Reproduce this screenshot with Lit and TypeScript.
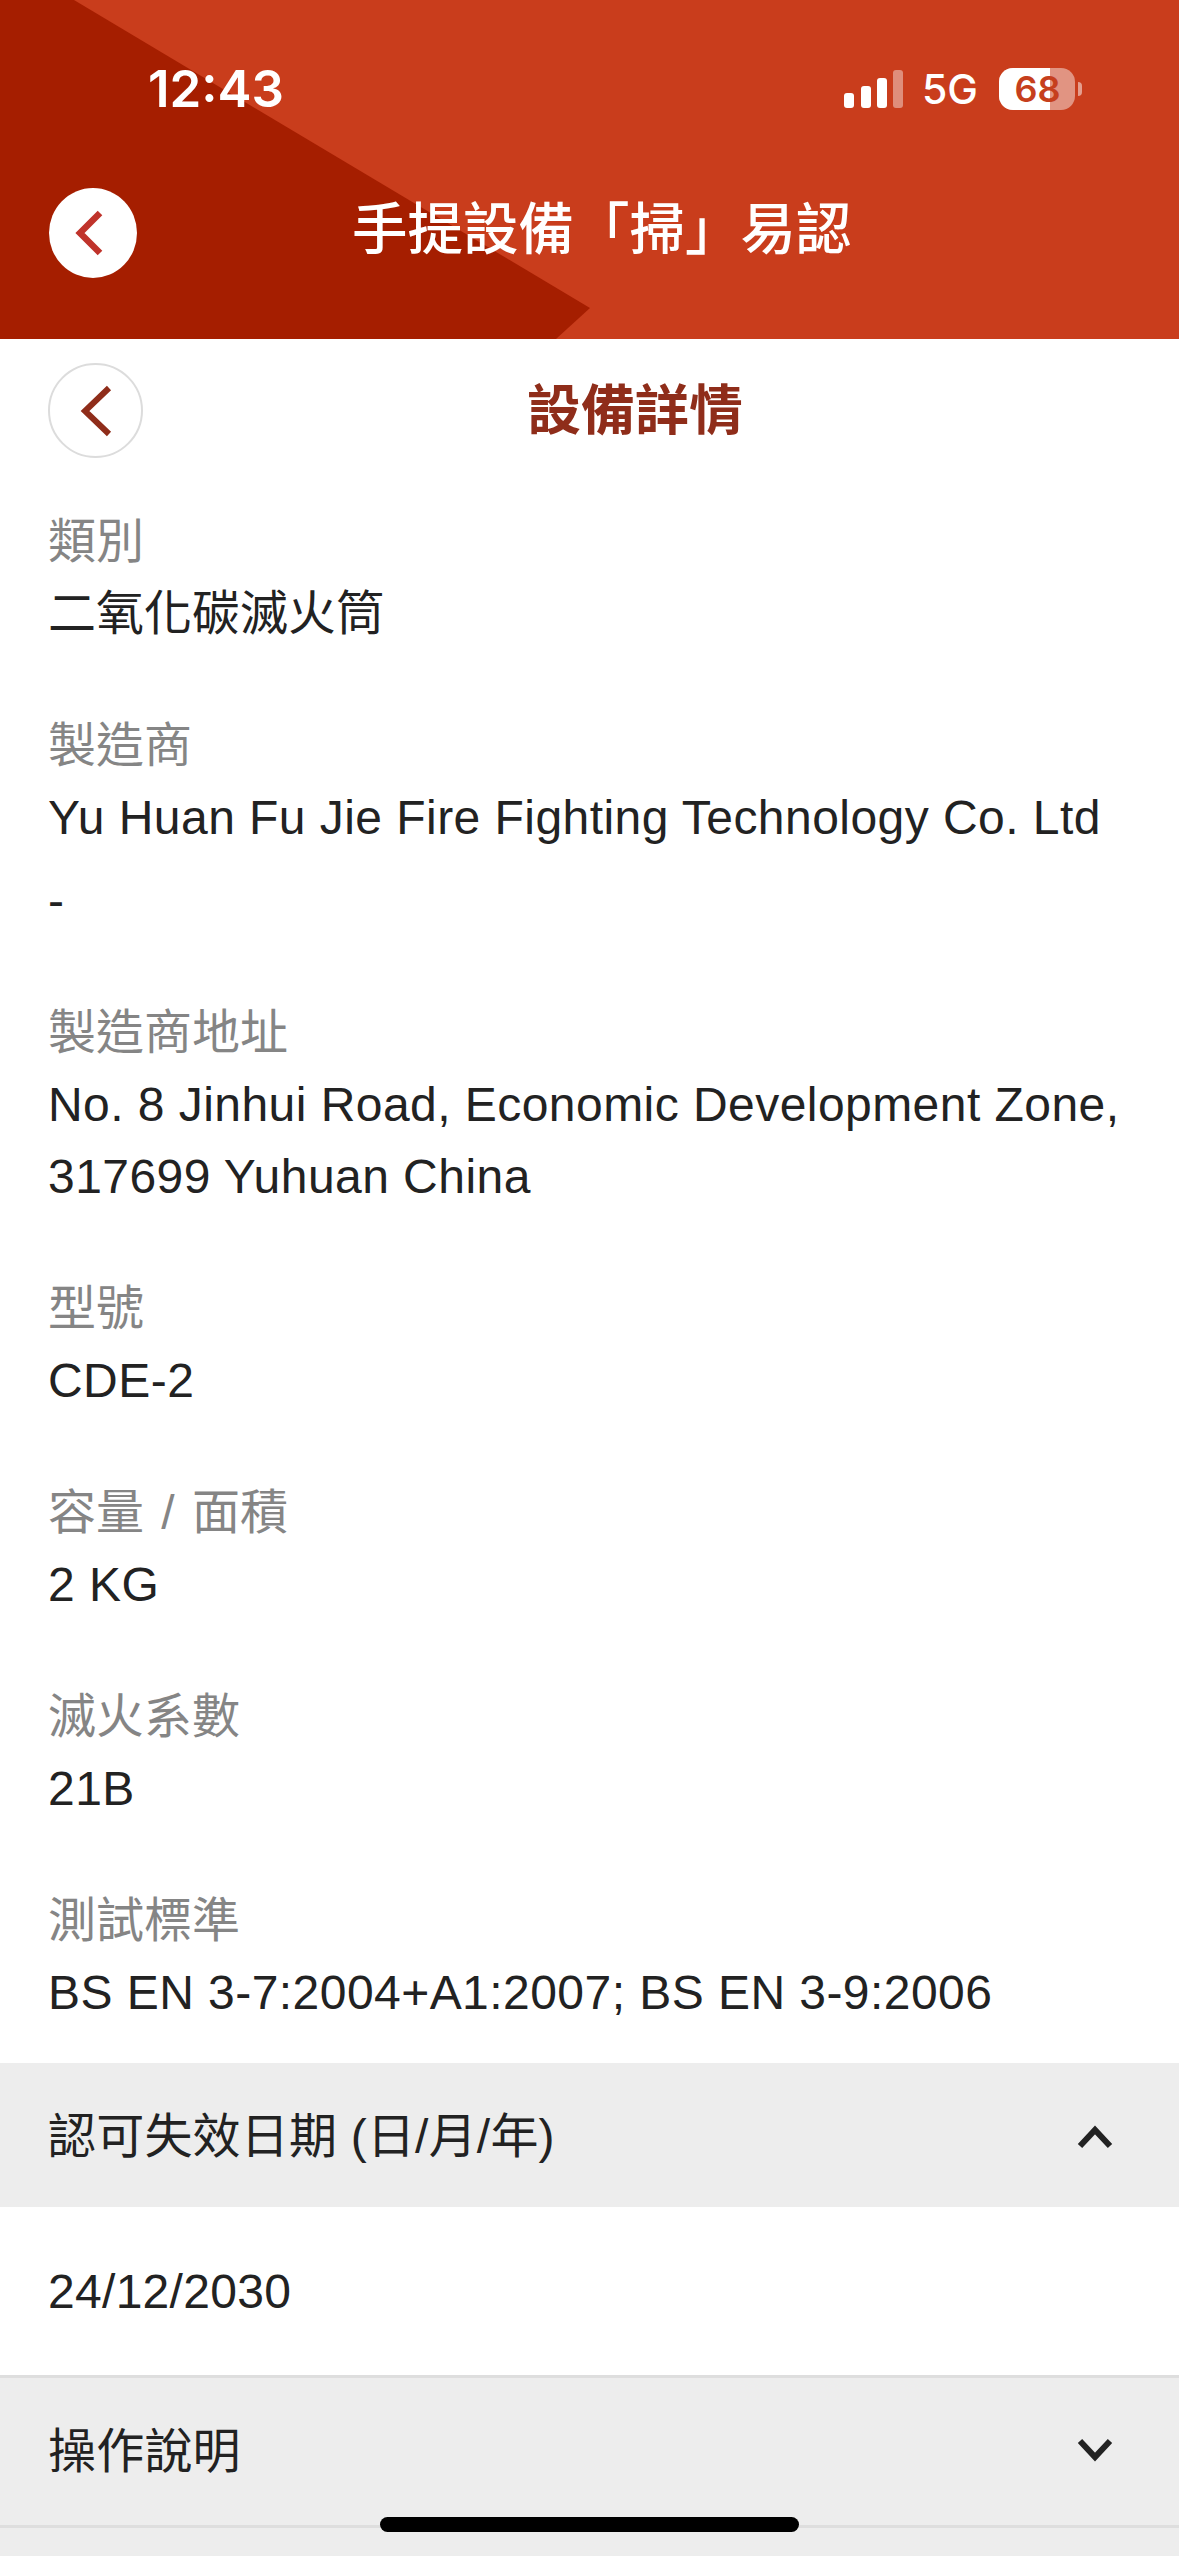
import { LitElement, html, css } from "lit";
import { customElement } from "lit/decorators.js";
import { classMap } from "lit/directives/class-map.js";

const groups: { label: string; values: string[]; cjk?: boolean }[] = [
  { label: "類別", values: ["二氧化碳滅火筒"], cjk: true },
  { label: "製造商", values: ["Yu Huan Fu Jie Fire Fighting Technology Co. Ltd", "-"] },
  { label: "製造商地址", values: ["No. 8 Jinhui Road, Economic Development Zone, 317699 Yuhuan China"] },
  { label: "型號", values: ["CDE-2"] },
  { label: "容量 / 面積", values: ["2 KG"] },
  { label: "滅火系數", values: ["21B"] },
  { label: "測試標準", values: ["BS EN 3-7:2004+A1:2007; BS EN 3-9:2006"] },
];

@customElement("app-root")
export class AppRoot extends LitElement {
  static styles = css`
    :host {
      display: block;
      position: relative;
      width: 1179px;
      height: 2556px;
      overflow: hidden;
      background: #fff;
      font-family: "Liberation Sans", "Noto Sans CJK TC", sans-serif;
      color: #222;
    }
    .header {
      position: relative;
      height: 339px;
      background: #c93d1c;
      color: #fff;
      overflow: hidden;
      box-sizing: border-box;
      padding: 60px 97px 0 148px;
    }
    .wedge {
      position: absolute;
      inset: 0;
      background: #a51e00;
      clip-path: polygon(0 0, 74px 0, 590px 308px, 556px 339px, 0 339px);
    }
    .status {
      position: relative;
      display: flex;
      align-items: center;
      justify-content: space-between;
      height: 58px;
    }
    .time {
      font-family: Inter, "Liberation Sans", sans-serif;
      font-size: 51px;
      font-weight: 600;
      line-height: 58px;
      color: #fff;
    }
    .status-right {
      display: flex;
      align-items: center;
      gap: 19px;
    }
    .five-g {
      font-size: 41px;
      line-height: 44px;
      font-family: Inter, "Liberation Sans", sans-serif;
      font-weight: 500;
    }
    .battery {
      position: relative;
      width: 76px;
      height: 42px;
      border-radius: 14px;
      overflow: hidden;
      background: rgba(255, 255, 255, 0.45);
      display: flex;
      align-items: center;
      justify-content: center;
      font-family: Inter, "Liberation Sans", sans-serif;
      font-size: 36px;
      font-weight: 600;
      color: #c63f1d;
    }
    .battery .fill {
      position: absolute;
      inset: 0 25px 0 0;
      background: #fff;
    }
    .battery span {
      position: relative;
      margin-left: 1px;
    }
    .batt-wrap {
      display: flex;
      align-items: center;
      gap: 3px;
      margin-left: 2px;
    }
    .cap {
      width: 4px;
      height: 14px;
      background: rgba(255, 255, 255, 0.5);
      border-radius: 0 4px 4px 0;
    }
    .nav {
      position: absolute;
      left: 49px;
      right: 0;
      top: 188px;
      display: flex;
      align-items: center;
    }
    .nav-back {
      width: 88px;
      height: 90px;
      border-radius: 50%;
      background: #fff;
      display: flex;
      align-items: center;
      justify-content: center;
      flex: none;
    }
    .nav-back svg {
      margin-right: 8px;
    }
    .nav-title {
      margin-left: 215px;
      font-size: 55.5px;
      line-height: 82px;
      font-weight: 500;
      white-space: nowrap;
      margin-top: -6px;
    }
    .toolbar {
      height: 167px;
      box-sizing: border-box;
      padding: 24px 0 0 48px;
      display: flex;
      align-items: flex-start;
    }
    .back {
      width: 95px;
      height: 95px;
      box-sizing: border-box;
      border-radius: 50%;
      border: 2px solid #dcdcdc;
      background: #fff;
      display: flex;
      align-items: center;
      justify-content: center;
      flex: none;
    }
    .page-title {
      margin: 1px 0 0 384px;
      font-size: 54px;
      line-height: 95px;
      font-weight: 700;
      color: #8f2d1a;
      white-space: nowrap;
    }
    .details {
      padding: 0 48px 34px;
      display: flex;
      flex-direction: column;
      gap: 60px;
    }
    .label {
      font-size: 48px;
      line-height: 72px;
      color: #858585;
      word-spacing: 4px;
    }
    .value {
      font-size: 48px;
      line-height: 72px;
      color: #222;
      letter-spacing: 0.45px;
    }
    .value.cjk {
      letter-spacing: 0;
    }
    .value + .value {
      margin-top: 11px;
    }
    .acc {
      display: flex;
      align-items: center;
      justify-content: space-between;
      background: #ededed;
      padding: 0 66px 0 48px;
      font-size: 48px;
      letter-spacing: 0.2px;
      color: #222;
    }
    .acc.one {
      height: 144px;
    }
    .acc.one span {
      padding-bottom: 6px;
    }
    .acc.one svg {
      margin-top: 3px;
    }
    .acc.two {
      height: 147px;
      border-top: 3px solid #dedede;
    }
    .acc.two span {
      padding-bottom: 10px;
    }
    .acc.two svg {
      margin-bottom: 3px;
    }
    .panel {
      height: 168px;
      display: flex;
      align-items: center;
      padding: 0 48px;
      font-size: 48px;
      letter-spacing: 0.3px;
      box-sizing: border-box;
    }
    .rest {
      height: 40px;
      background: #ededed;
      border-top: 3px solid #dedede;
    }
    .home {
      position: absolute;
      left: 380px;
      top: 2517px;
      width: 419px;
      height: 15px;
      border-radius: 8px;
      background: #000;
    }
    svg {
      display: block;
    }
  `;

  render() {
    return html`
      <div class="header">
        <div class="wedge"></div>
        <div class="status">
          <div class="time">12:43</div>
          <div class="status-right">
            <svg width="59" height="40" viewBox="0 0 59 40">
              <rect x="0" y="24" width="10" height="15" rx="3" fill="#fff"></rect>
              <rect x="17" y="17" width="10" height="22" rx="3" fill="#fff"></rect>
              <rect x="33" y="9" width="10" height="30" rx="3" fill="#fff"></rect>
              <rect x="49" y="1" width="10" height="38" rx="3" fill="#fff" fill-opacity="0.42"></rect>
            </svg>
            <div class="five-g">5G</div>
            <div class="batt-wrap">
              <div class="battery"><div class="fill"></div><span>68</span></div>
              <div class="cap"></div>
            </div>
          </div>
        </div>
        <div class="nav">
          <div class="nav-back">
            <svg width="30" height="46" viewBox="0 0 30 46">
              <path d="M26 3 L6 23 L26 43" fill="none" stroke="#c0332b" stroke-width="6.5"></path>
            </svg>
          </div>
          <div class="nav-title">手提設備「掃」易認</div>
        </div>
      </div>
      <div class="toolbar">
        <div class="back">
          <svg width="34" height="52" viewBox="0 0 34 52">
            <path d="M30 3 L6 26 L30 49" fill="none" stroke="#8f2d1a" stroke-width="6"></path>
          </svg>
        </div>
        <h1 class="page-title">設備詳情</h1>
      </div>
      <div class="details">
        ${groups.map(
          (g) => html`
            <div class="group">
              <div class="label">${g.label}</div>
              ${g.values.map((v) => html`<div class=${classMap({ value: true, cjk: !!g.cjk })}>${v}</div>`)}
            </div>
          `
        )}
      </div>
      <div class="acc one">
        <span>認可失效日期 (日/月/年)</span>
        <svg width="36" height="24" viewBox="0 0 36 24">
          <path d="M3 21 L18 5 L33 21" fill="none" stroke="#222" stroke-width="6"></path>
        </svg>
      </div>
      <div class="panel">24/12/2030</div>
      <div class="acc two">
        <span>操作說明</span>
        <svg width="36" height="24" viewBox="0 0 36 24">
          <path d="M3 3 L18 19 L33 3" fill="none" stroke="#222" stroke-width="6"></path>
        </svg>
      </div>
      <div class="rest"></div>
      <div class="home"></div>
    `;
  }
}
